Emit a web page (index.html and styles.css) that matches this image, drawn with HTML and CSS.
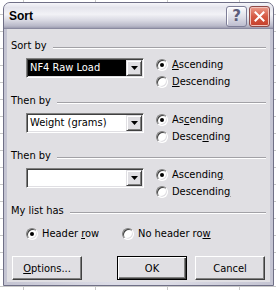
FILE: index.html
```html
<!DOCTYPE html>
<html>
<head>
<meta charset="utf-8">
<link rel="stylesheet" href="styles.css">
</head>
<body>
<div class="window">
  <div class="titlebar">
    <span class="title">Sort</span>
    <div class="tbtns">
      <span class="tbtn help">?</span>
      <span class="tbtn close"><svg width="11" height="11" viewBox="0 0 11 11"><path d="M1.5 1.5 L9.5 9.5 M9.5 1.5 L1.5 9.5" stroke="#fff" stroke-width="2" stroke-linecap="square"/></svg></span>
    </div>
  </div>
  <div class="client">
    <section class="group">
      <div class="group-head"><span>Sort by</span><span class="rule"></span></div>
      <div class="group-body">
        <div class="combo selected"><span class="combo-text">NF4 Raw Load</span><span class="combo-btn"><svg width="7" height="4" viewBox="0 0 7 4"><path d="M0 0H7L3.5 4Z" fill="#000"/></svg></span></div>
        <div class="radios">
          <div class="radio"><span class="rb checked"></span><span><u>A</u>scending</span></div>
          <div class="radio"><span class="rb"></span><span><u>D</u>escending</span></div>
        </div>
      </div>
    </section>
    <section class="group">
      <div class="group-head"><span>Then by</span><span class="rule"></span></div>
      <div class="group-body">
        <div class="combo"><span class="combo-text">Weight (grams)</span><span class="combo-btn"><svg width="7" height="4" viewBox="0 0 7 4"><path d="M0 0H7L3.5 4Z" fill="#000"/></svg></span></div>
        <div class="radios">
          <div class="radio"><span class="rb checked"></span><span>As<u>c</u>ending</span></div>
          <div class="radio"><span class="rb"></span><span>Desce<u>n</u>ding</span></div>
        </div>
      </div>
    </section>
    <section class="group">
      <div class="group-head"><span>Then by</span><span class="rule"></span></div>
      <div class="group-body">
        <div class="combo"><span class="combo-text"></span><span class="combo-btn"><svg width="7" height="4" viewBox="0 0 7 4"><path d="M0 0H7L3.5 4Z" fill="#000"/></svg></span></div>
        <div class="radios">
          <div class="radio"><span class="rb checked"></span><span>Ascendin<u>g</u></span></div>
          <div class="radio"><span class="rb"></span><span>Descendin<u>g</u></span></div>
        </div>
      </div>
    </section>
    <section class="group">
      <div class="group-head"><span>My list has</span><span class="rule"></span></div>
      <div class="list-body">
        <div class="radio first"><span class="rb checked"></span><span>Header <u>r</u>ow</span></div>
        <div class="radio"><span class="rb"></span><span>No header ro<u>w</u></span></div>
      </div>
    </section>
    <div class="buttons">
      <button class="btn"><u>O</u>ptions...</button>
      <button class="btn default ok">OK</button>
      <button class="btn">Cancel</button>
    </div>
  </div>
</div>
</body>
</html>
```

FILE: styles.css
```css
* { box-sizing: border-box; }

html, body {
  margin: 0;
  width: 276px;
  height: 290px;
  overflow: hidden;
}

body {
  font-family: "DejaVu Sans Condensed", "Liberation Sans", Arial, sans-serif;
  font-size: 11px;
  color: #000;
  background-color: #fff;
  background-image:
    linear-gradient(90deg, #c8c8c8 1px, transparent 1px),
    linear-gradient(#c8c8c8 1px, transparent 1px);
  background-size: 72px 100%, 100% 17px;
  background-position: 23px 0, 0 14px;
}

.window {
  width: 271px;
  height: 284px;
  margin: 2px 0 0 3px;
  border: 1px solid #6f6f86;
  border-radius: 7px 7px 0 0;
  background: linear-gradient(90deg, #c4c4d2, #dcdce6 40%, #dcdce6 60%, #c4c4d2);
  display: flex;
  flex-direction: column;
  padding: 0 3px 3px;
}

.titlebar {
  height: 26px;
  margin: 0 -3px;
  padding: 0 3px 0 5px;
  display: flex;
  align-items: center;
  border-radius: 6px 6px 0 0;
  background: linear-gradient(#f6f6fa 0%, #e4e4ec 18%, #f2f2f6 45%, #d8d8e2 70%, #b8b8c8 92%, #9c9cb0 100%);
  border-bottom: 1px solid #8a8aa0;
}

.title {
  font-family: "Liberation Sans", Arial, sans-serif;
  font-weight: bold;
  font-size: 12px;
  flex: 1;
  color: #000;
  padding-top: 1px;
}

.tbtns {
  display: flex;
  gap: 2px;
  margin-top: 1px;
}

.tbtn {
  width: 21px;
  height: 21px;
  border-radius: 3px;
  display: flex;
  align-items: center;
  justify-content: center;
}

.help {
  border: 1px solid #7e7e98;
  background: linear-gradient(#fbfbfd, #dcdce6 55%, #bdbdcf);
  box-shadow: inset 1px 1px #fff;
  color: #5c5c7a;
  font-weight: bold;
  font-size: 15px;
  font-family: "DejaVu Sans", "Liberation Sans", sans-serif;
}

.close {
  border: 1px solid #8e4a48;
  background: linear-gradient(#ec9c8c, #d65a44 50%, #c43e2a);
  box-shadow: inset 0 0 0 1px #f2c4bc;
}

.client {
  flex: 1;
  background: #e0dfe3;
  padding: 10px 4px 0;
  display: flex;
  flex-direction: column;
  gap: 6px;
}

.group-head {
  height: 13px;
  line-height: 13px;
  display: flex;
  gap: 6px;
}

.rule {
  flex: 1;
  height: 2px;
  margin-top: 8px;
  border-top: 1px solid #a2a1a6;
  border-bottom: 1px solid #fff;
}

.group-body {
  display: flex;
  margin-top: 6px;
  padding-left: 15px;
}

.combo {
  width: 118px;
  height: 20px;
  display: flex;
  border: 1px solid;
  border-color: #808080 #fff #fff #808080;
  box-shadow: inset 1px 1px #404040, inset -1px -1px #e0dfe3;
  background: #fff;
  padding: 1px;
}

.combo-text {
  flex: 1;
  line-height: 16px;
  padding-left: 2px;
  white-space: nowrap;
  overflow: hidden;
}

.combo.selected .combo-text {
  background: #000;
  color: #fff;
}

.combo-btn {
  width: 16px;
  height: 16px;
  background: #e0dfe3;
  border: 1px solid;
  border-color: #e0dfe3 #404040 #404040 #e0dfe3;
  box-shadow: inset 1px 1px #fff, inset -1px -1px #808080;
  display: flex;
  align-items: center;
  justify-content: center;
}

.radios {
  margin-left: 12px;
  display: flex;
  flex-direction: column;
  gap: 4px;
}

.radio {
  height: 13px;
  line-height: 13px;
  display: flex;
  align-items: center;
  gap: 4px;
  white-space: nowrap;
}

.rb {
  width: 12px;
  height: 12px;
  border-radius: 50%;
  border: 1px solid;
  border-color: #808080 #fff #fff #808080;
  background: #fff;
  box-shadow: inset 1px 1px #404040, inset -1px -1px #e0dfe3;
  display: flex;
  align-items: center;
  justify-content: center;
  flex: none;
}

.rb.checked::after {
  content: "";
  width: 4px;
  height: 4px;
  border-radius: 50%;
  background: #000;
}

.list-body {
  display: flex;
  margin-top: 10px;
  padding-left: 15px;
}

.radio.first {
  width: 96px;
}

.buttons {
  display: flex;
  gap: 8px;
  margin-top: 10px;
  padding: 0 1px;
}

.btn {
  width: 70px;
  height: 24px;
  font: inherit;
  color: #000;
  background: #e0dfe3;
  border: 1px solid;
  border-color: #fff #404040 #404040 #fff;
  box-shadow: inset -1px -1px #808080;
  padding: 0;
}

.btn.ok {
  margin-left: auto;
}

.btn.default {
  border: 1px solid #000;
  box-shadow: inset 1px 1px #fff, inset -1px -1px #404040, inset -2px -2px #808080;
}
```
